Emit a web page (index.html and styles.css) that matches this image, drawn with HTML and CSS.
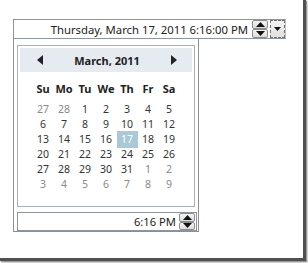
FILE: index.html
```html
<!DOCTYPE html>
<html>
<head>
<meta charset="utf-8">
<link rel="stylesheet" href="styles.css">
</head>
<body>
<div class="screen">
  <div class="picker">
    <div class="field">
      <span class="value">Thursday, March 17, 2011 6:16:00 PM</span>
      <div class="spin">
        <div class="sbtn"><svg width="9" height="5" viewBox="0 0 9 5"><path d="M0 5 L4.5 0 L9 5Z" fill="#111"/></svg></div>
        <div class="sbtn"><svg width="9" height="5" viewBox="0 0 9 5"><path d="M0 0 L4.5 5 L9 0Z" fill="#111"/></svg></div>
      </div>
      <div class="drop"><svg width="7" height="4" viewBox="0 0 7 4"><path d="M0 0 L3.5 4 L7 0Z" fill="#111"/></svg></div>
    </div>
  </div>
  <div class="popup">
    <div class="calendar">
      <div class="head">
        <svg class="nav" width="6" height="10" viewBox="0 0 6 10"><path d="M6 0 L0 5 L6 10Z" fill="#222"/></svg>
        <span class="month">March, 2011</span>
        <svg class="nav" width="6" height="10" viewBox="0 0 6 10"><path d="M0 0 L6 5 L0 10Z" fill="#222"/></svg>
      </div>
      <div class="names">
        <span class="dn">Su</span><span class="dn">Mo</span><span class="dn">Tu</span><span class="dn">We</span><span class="dn">Th</span><span class="dn">Fr</span><span class="dn">Sa</span>
      </div>
      <div class="grid">
        <span class="d o">27</span><span class="d o">28</span><span class="d">1</span><span class="d">2</span><span class="d">3</span><span class="d">4</span><span class="d">5</span>
        <span class="d">6</span><span class="d">7</span><span class="d">8</span><span class="d">9</span><span class="d">10</span><span class="d">11</span><span class="d">12</span>
        <span class="d">13</span><span class="d">14</span><span class="d">15</span><span class="d">16</span><span class="d sel">17</span><span class="d">18</span><span class="d">19</span>
        <span class="d">20</span><span class="d">21</span><span class="d">22</span><span class="d">23</span><span class="d">24</span><span class="d">25</span><span class="d">26</span>
        <span class="d">27</span><span class="d">28</span><span class="d">29</span><span class="d">30</span><span class="d">31</span><span class="d o">1</span><span class="d o">2</span>
        <span class="d o">3</span><span class="d o">4</span><span class="d o">5</span><span class="d o">6</span><span class="d o">7</span><span class="d o">8</span><span class="d o">9</span>
      </div>
    </div>
    <div class="timebox">
      <span class="value">6:16 PM</span>
      <div class="spin">
        <div class="sbtn"><svg width="9" height="5" viewBox="0 0 9 5"><path d="M0 5 L4.5 0 L9 5Z" fill="#111"/></svg></div>
        <div class="sbtn"><svg width="9" height="5" viewBox="0 0 9 5"><path d="M0 0 L4.5 5 L9 0Z" fill="#111"/></svg></div>
      </div>
    </div>
  </div>
</div>
</body>
</html>
```
FILE: styles.css
```css
html, body { margin: 0; padding: 0; background: #fff; }
body { width: 308px; height: 263px; overflow: hidden; font-family: "Noto Sans", "Open Sans", sans-serif; font-size: 11px; color: #333; }
.screen {
  box-sizing: border-box;
  width: 306px; height: 261px;
  background: #fff;
  border-right: 3px solid #505050;
  border-bottom: 3px solid #505050;
  box-shadow: 1px 1px 1px #9a9a9a, 2px 2px 2px #d0d0d0;
  padding: 19px 0 0 13px;
}
.picker { width: 273px; }
.field {
  box-sizing: border-box;
  height: 20px;
  border: 1px solid #8f959c;
  border-right-color: #c0c4c8;
  display: flex; align-items: center; justify-content: flex-end;
}
.field .value { font-size: 11.3px; color: #222; margin-right: 4px; }
.spin { display: flex; flex-direction: column; width: 16px; height: 18px; margin-right: 2px; }
.sbtn {
  box-sizing: border-box; flex: 1;
  border: 1px solid #8c8c8c; border-radius: 2px;
  background: linear-gradient(#f4f4f4, #dcdcdc);
  display: flex; align-items: center; justify-content: center;
}
.drop {
  box-sizing: border-box; width: 15px; height: 18px;
  border: 1px dashed #707070;
  background: linear-gradient(#f2f2f2, #e0e0e0);
  display: flex; align-items: center; justify-content: center;
}
.popup {
  box-sizing: border-box;
  width: 186px; height: 193px;
  border: 1px solid #8a9096;
  border-top: none;
  padding: 6px 2px 0 3px;
  background: #fff;
}
.calendar {
  box-sizing: border-box;
  width: 178px; height: 162px;
  border: 1px solid #a9b0b8;
  padding: 2px 2px 0 2px;
}
.head {
  height: 24px;
  background: #e6ebf1;
  display: flex; align-items: center; justify-content: space-between;
  padding: 0 15px 0 17px;
}
.month { font-weight: bold; font-size: 11px; color: #222; }
.names, .grid {
  display: grid;
  grid-template-columns: repeat(7, 21px);
  justify-content: center;
}
.names { margin-top: 9px; height: 16px; margin-bottom: 5px; }
.grid { grid-auto-rows: 15px; }
.dn { font-weight: bold; font-size: 11px; color: #222; text-align: center; line-height: 16px; }
.d { text-align: center; line-height: 15px; font-size: 10.5px; color: #333; }
.d.o { color: #8a8a8a; }
.d.sel { background: #a9c9d7; color: #fff; box-shadow: 0 1px 0 #a9c9d7, 0 -1px 0 #a9c9d7; }
.timebox {
  box-sizing: border-box;
  width: 180px; height: 19px;
  margin-top: 5px;
  border: 1px solid #8f959c;
  display: flex; align-items: center; justify-content: flex-end;
}
.timebox .value { font-size: 11.2px; color: #222; margin-right: 3px; }
.timebox .spin { height: 17px; margin-right: 1px; }
```
